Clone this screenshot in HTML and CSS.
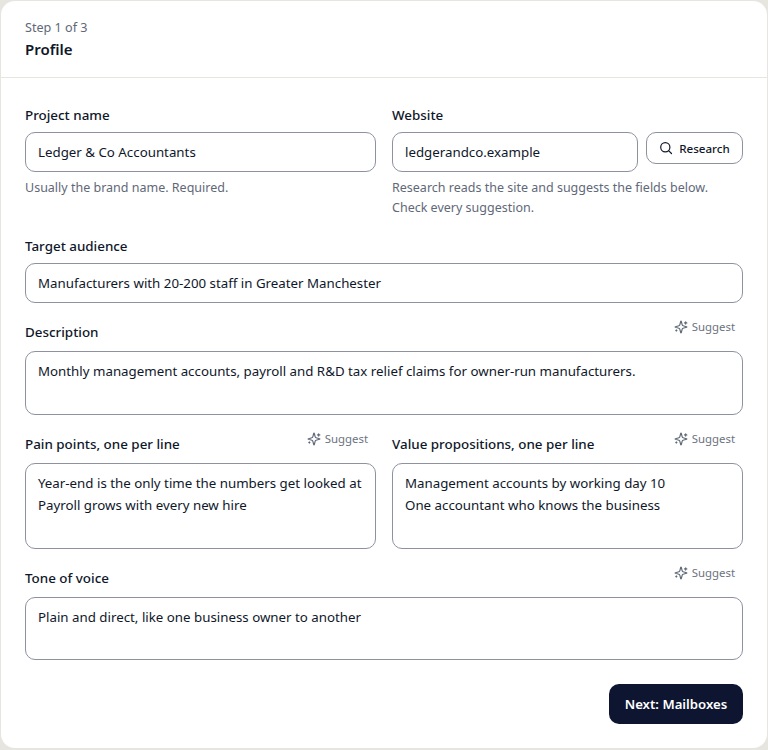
FILE: index.html
```html
<!DOCTYPE html>
<html lang="en">
<head>
    <meta charset="UTF-8">
    <title>Profile</title>
    <link rel="stylesheet" href="styles.css">
</head>
<body>
    <svg class="defs" width="0" height="0">
        <symbol id="spark" viewBox="0 0 24 24">
            <path d="M9.937 15.5A2 2 0 0 0 8.5 14.063l-6.135-1.582a.5.5 0 0 1 0-.962L8.5 9.936A2 2 0 0 0 9.937 8.5l1.582-6.135a.5.5 0 0 1 .963 0L14.063 8.5A2 2 0 0 0 15.5 9.937l6.135 1.581a.5.5 0 0 1 0 .964L15.5 14.063a2 2 0 0 0-1.437 1.437l-1.582 6.135a.5.5 0 0 1-.963 0z"/>
            <path d="M20 3v4M22 5h-4M4 17v2M5 18H3"/>
        </symbol>
    </svg>
    <div class="card">
        <div class="card-head">
            <p class="step">Step 1 of 3</p>
            <h1>Profile</h1>
        </div>
        <form class="form">
            <div class="row two top-row">
                <div class="field">
                    <label class="label-row"><span>Project name</span></label>
                    <div class="box">Ledger &amp; Co Accountants</div>
                    <p class="hint">Usually the brand name. Required.</p>
                </div>
                <div class="field">
                    <label class="label-row"><span>Website</span></label>
                    <div class="with-button">
                        <div class="box grow">ledgerandco.example</div>
                        <button type="button" class="research">
                            <svg width="14" height="14" viewBox="0 0 14 14" fill="none" stroke="#0f172a" stroke-width="1.2" stroke-linecap="round"><circle cx="6.3" cy="6.3" r="4.6"/><path d="M9.8 9.8l2.7 2.7"/></svg>
                            Research
                        </button>
                    </div>
                    <p class="hint">Research reads the site and suggests the fields below.<br>Check every suggestion.</p>
                </div>
            </div>
            <div class="field gap">
                <label class="label-row"><span>Target audience</span></label>
                <div class="box">Manufacturers with 20-200 staff in Greater Manchester</div>
            </div>
            <div class="field gap">
                <label class="label-row suggest-row"><span>Description</span>
                    <span class="suggest"><svg class="spark"><use href="#spark"/></svg>Suggest</span>
                </label>
                <div class="box desc">Monthly management accounts, payroll and R&amp;D tax relief claims for owner-run manufacturers.</div>
            </div>
            <div class="row two gap">
                <div class="field">
                    <label class="label-row suggest-row"><span>Pain points, one per line</span>
                        <span class="suggest"><svg class="spark"><use href="#spark"/></svg>Suggest</span>
                    </label>
                    <div class="box tall">Year-end is the only time the numbers get looked at<br>Payroll grows with every new hire</div>
                </div>
                <div class="field">
                    <label class="label-row suggest-row"><span>Value propositions, one per line</span>
                        <span class="suggest"><svg class="spark"><use href="#spark"/></svg>Suggest</span>
                    </label>
                    <div class="box tall">Management accounts by working day 10<br>One accountant who knows the business</div>
                </div>
            </div>
            <div class="field">
                <label class="label-row suggest-row"><span>Tone of voice</span>
                    <span class="suggest"><svg class="spark"><use href="#spark"/></svg>Suggest</span>
                </label>
                <div class="box tone">Plain and direct, like one business owner to another</div>
            </div>
            <div class="actions">
                <button type="button" class="next">Next: Mailboxes</button>
            </div>
        </form>
    </div>
</body>
</html>
```

FILE: styles.css
```css
* {
    box-sizing: border-box;
}
body {
    margin: 0;
    background: #e7e5df;
    font-family: "Noto Sans", sans-serif;
    color: #0f172a;
    height: 750px;
    overflow: hidden;
}
.defs {
    position: absolute;
}
.card {
    margin: 1px;
    height: 747px;
    width: 766px;
    background: #fff;
    border-radius: 14px;
}
.card-head {
    height: 77px;
    padding: 19px 24px 0;
    border-bottom: 1px solid #e7e5df;
}
.step {
    margin: 0;
    font-size: 12.6px;
    line-height: 16px;
    color: #5f6878;
}
h1 {
    margin: 3px 0 0;
    font-size: 15px;
    line-height: 20px;
    font-weight: 600;
}
.form {
    padding: 25px 24px 0;
}
.row.two {
    display: grid;
    grid-template-columns: 351px 351px;
    gap: 16px;
}
.top-row {
    height: 131px;
}
.gap {
    margin-bottom: 17px;
}
.label-row {
    display: flex;
    justify-content: space-between;
    align-items: flex-start;
    height: 29px;
    font-size: 13.4px;
    line-height: 24px;
    font-weight: 500;
}
.suggest-row {
    height: 31px;
}
.suggest {
    display: flex;
    align-items: center;
    gap: 4px;
    margin-top: -1px;
    font-size: 11.4px;
    line-height: 16px;
    font-weight: 400;
    color: #6b7280;
    padding-right: 8px;
}
.spark {
    width: 14px;
    height: 14px;
    fill: none;
    stroke: #5f6878;
    stroke-width: 2;
    stroke-linecap: round;
    stroke-linejoin: round;
}
.box {
    height: 40px;
    border: 1px solid #8d92a0;
    border-radius: 10px;
    padding: 8px 12px;
    font-size: 13.3px;
    line-height: 22px;
}
.desc {
    height: 64px;
}
.tall {
    height: 86px;
}
.tone {
    height: 63px;
}
.with-button {
    display: flex;
    gap: 8px;
    align-items: flex-start;
}
.grow {
    flex: 1;
}
.research {
    display: flex;
    align-items: center;
    gap: 6px;
    height: 32px;
    width: 97px;
    padding-bottom: 1px;
    justify-content: center;
    background: #fff;
    border: 1px solid #8d92a0;
    border-radius: 10px;
    font-family: inherit;
    font-size: 11.6px;
    font-weight: 500;
    color: #0f172a;
}
.hint {
    margin: 6px 0 0;
    font-size: 12.5px;
    line-height: 20px;
    color: #5f6878;
}
.actions {
    display: flex;
    justify-content: flex-end;
    margin-top: 24px;
}
.next {
    width: 134px;
    height: 40px;
    background: #0d1530;
    color: #fff;
    border: none;
    border-radius: 10px;
    font-family: inherit;
    font-size: 13.2px;
    font-weight: 600;
}
```
